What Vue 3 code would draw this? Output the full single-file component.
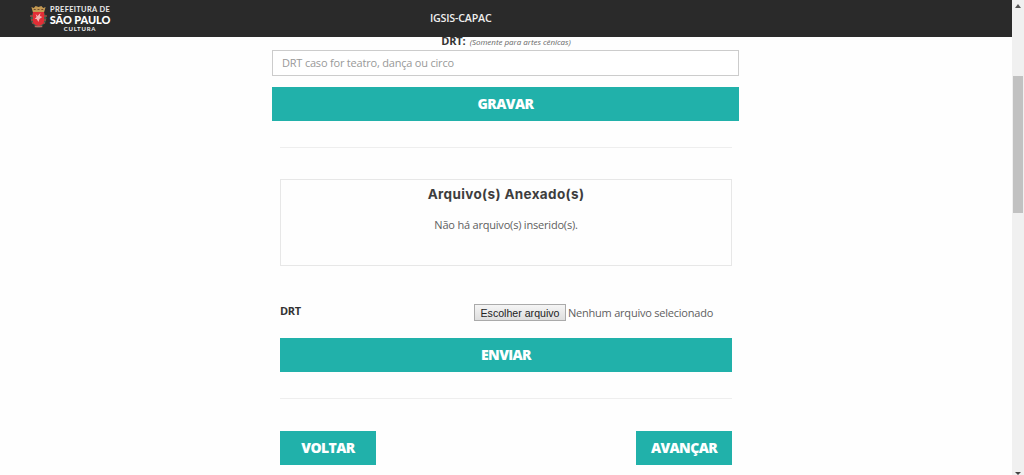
<script setup>
const actions = ['VOLTAR', 'AVANÇAR']
</script>

<template>
  <div class="page">
    <div class="content">
      <header>
        <div class="brand">
          <svg class="crest" viewBox="0 0 18 22" preserveAspectRatio="none">
            <path d="M3 7 Q-1 11 2 17 L7 21.5 H11 L16 17 Q19 11 15 7" fill="#37634d" />
            <path d="M0 10h4M1 14h3M2 17h3M14 10h4M14 14h3M13 17h3" stroke="#a14743" stroke-width="1.5" />
            <path d="M1.5 1 4 2 6 0 9 1 12 0 14 2 16.5 1 15 6H3Z" fill="#c59a52" />
            <path d="M4 3.5h2M8 3.5h2M12 3.5h2" stroke="#6c4930" />
            <path d="M3 6H15V14Q15 19 9 20 3 19 3 14Z" fill="#e22d35" />
            <path d="M6 8 8 10 11 7 10.5 10 13 11 10 13 9 16 7 13 5 13 7 11Z" fill="#f2b5b5" />
            <path d="M5 20.5h8" stroke="#b76761" stroke-width="1.5" />
          </svg>
          <div class="words">
            <span class="w1">PREFEITURA DE</span>
            <span class="w2">SÃO PAULO</span>
            <span class="w3">CULTURA</span>
          </div>
        </div>
        <span class="title">IGSIS-CAPAC</span>
      </header>
      <main>
        <div class="label"><b>DRT:</b> <i>(Somente para artes cênicas)</i></div>
        <input type="text" placeholder="DRT caso for teatro, dança ou circo">
        <button class="action save">GRAVAR</button>
        <div class="inner">
          <hr class="first">
          <section>
            <h2>Arquivo(s) Anexado(s)</h2>
            <p>Não há arquivo(s) inserido(s).</p>
          </section>
          <div class="upload">
            <b>DRT</b>
            <div class="picker"><button>Escolher arquivo</button><span>Nenhum arquivo selecionado</span></div>
          </div>
          <button class="action send">ENVIAR</button>
          <hr class="second">
          <nav><button v-for="a in actions" :key="a" class="action">{{ a }}</button></nav>
        </div>
      </main>
    </div>
    <aside>
      <svg class="arrow" viewBox="0 0 12 13"><path d="M3 8 6 4 9 8Z" fill="#555" /></svg>
      <div class="thumb"></div>
      <svg class="arrow down" viewBox="0 0 12 13"><path d="M3 10 6 13 9 10Z" fill="#444" /></svg>
    </aside>
  </div>
</template>

<style>
body { margin: 0; overflow: hidden; }
</style>

<style scoped>
* { box-sizing: border-box; }
.page { display: grid; grid-template-columns: 1012px 12px; width: 1024px; height: 475px; background: #fefefe; color: #606060; font-family: "Open Sans", sans-serif; overflow: hidden; }
.content { height: 475px; overflow: hidden; }
header { position: relative; z-index: 1; display: grid; grid-template-columns: 430px 1fr; height: 37px; background: #2a2a2a; color: #eee; }
.brand { display: flex; padding: 6px 0 0 30px; }
.crest { width: 17px; height: 22px; margin-right: 3px; }
.words { display: flex; flex-direction: column; width: 60px; align-items: center; white-space: nowrap; font-family: Lato, sans-serif; }
.words span { display: block; }
.w1 { font-size: 7.4px; line-height: 8px; font-weight: 700; letter-spacing: .35px; }
.w2 { font-size: 11px; line-height: 11px; font-weight: 900; letter-spacing: -.1px; color: #fff; }
.w3 { font-size: 6px; line-height: 7px; font-weight: 700; letter-spacing: .75px; }
.title { font-size: 10.7px; line-height: 14px; padding-top: 11px; font-weight: 600; letter-spacing: -.2px; }
main { width: 467px; height: 438px; margin-left: 272px; }
.label { height: 13px; line-height: 14px; padding-left: 1px; text-align: center; color: #333; margin-top: -5px; margin-bottom: 5px; white-space: nowrap; }
.label b { font-size: 11px; letter-spacing: -.15px; }
.label i { font-size: 8px; letter-spacing: -.03px; color: #666; }
input { display: block; width: 467px; height: 26px; border: 1px solid #ccc; background: #fff; padding: 0 9px 1px; font: 11px "Open Sans", sans-serif; letter-spacing: -.2px; outline: none; }
input::placeholder { color: #999; opacity: 1; }
.action { display: block; height: 34px; border: 0; padding: 0; background: #21b1aa; color: #fff; font: 800 14px/34px "Open Sans", sans-serif; letter-spacing: -.6px; }
.save { width: 467px; margin-top: 11px; }
.inner { width: 452px; margin-left: 8px; }
hr { height: 1px; border: 0; background: #eee; margin: 0; }
.first { margin-top: 26px; }
section { height: 87px; margin-top: 31px; border: 1px solid #e7e7e7; text-align: center; }
h2 { font: 700 13.5px/20px Inter, sans-serif; letter-spacing: .35px; color: #3d3d3d; margin: 4px 0 0; }
p { font-size: 11px; line-height: 16px; letter-spacing: -.2px; margin: 13px 0 0; }
.upload { display: flex; justify-content: space-between; height: 18px; margin-top: 38px; }
.upload b { font-size: 11px; line-height: 14px; letter-spacing: -.3px; color: #333; }
.picker { display: flex; width: 258px; font-size: 11px; line-height: 17px; letter-spacing: -.22px; white-space: nowrap; }
.picker button { width: 92px; height: 17px; margin-right: 2px; padding: 1px 0 0; border: 1px solid #aaa; background: linear-gradient(#f5f5f5, #dedede); color: #222; font: 10.6px/14px "Liberation Sans", sans-serif; }
.send { width: 452px; margin-top: 16px; }
.second { margin-top: 26px; }
nav { display: flex; justify-content: space-between; margin-top: 32px; }
nav .action { width: 96px; }
aside { height: 475px; display: flex; flex-direction: column; align-items: center; background: #f0f0f0; }
.arrow { width: 12px; height: 13px; flex: none; }
.thumb { width: 10px; height: 137px; margin-top: 63px; background: #c1c1c1; }
.down { margin-top: auto; }
</style>
